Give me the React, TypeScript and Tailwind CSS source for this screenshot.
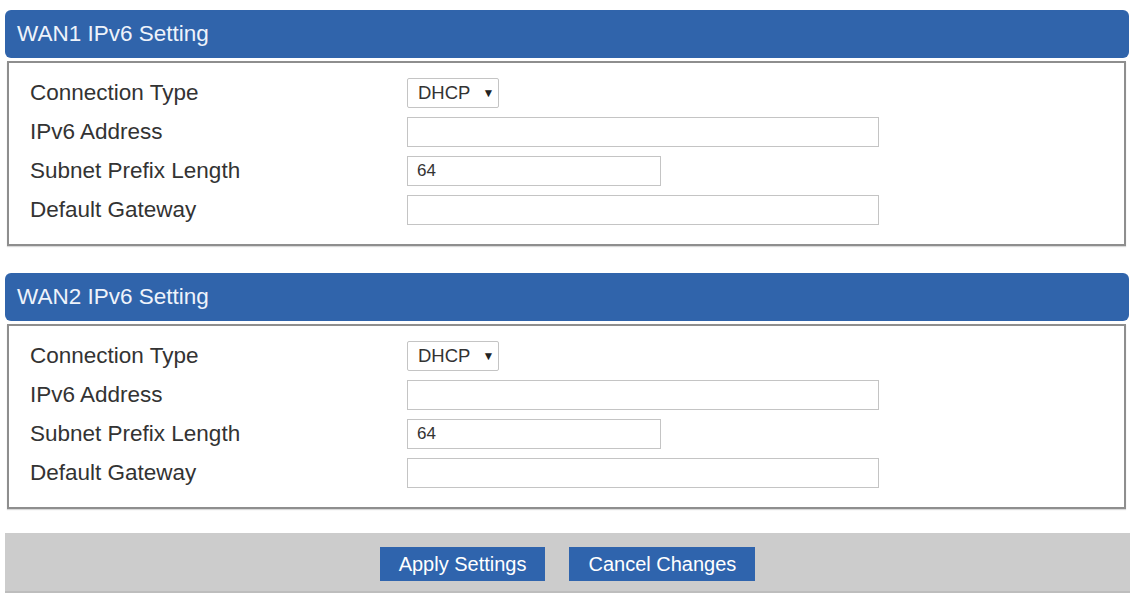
import React from "react";

const font = { fontFamily: '"Liberation Sans", Arial, sans-serif' };

function Row({ label, children }: { label: string; children: React.ReactNode }) {
  return (
    <div className="flex items-center h-[30px]">
      <div className="w-[377px] shrink-0 text-[22.5px] leading-none text-[#333333]">{label}</div>
      {children}
    </div>
  );
}

function Section({ title }: { title: string }) {
  return (
    <div className="flex flex-col">
      <div className="h-[48px] rounded-[6px] bg-[#3064ab] flex items-center pl-[12px] text-[22.5px] text-[#eef3fb]">
        {title}
      </div>
      <div className="mt-[3px] ml-[2px] mr-[3px] border-2 border-[#8e8e8e] bg-white pt-[15px] pb-[19px] pl-[21px] flex flex-col gap-[9px] shadow-[0_1px_1px_rgba(0,0,0,0.15)]">
        <Row label="Connection Type">
          <div className="h-[30px] w-[92px] border border-[#c4c4c4] rounded-[2px] flex items-center pl-[10px] text-[18.5px] text-[#333333] bg-white">
            <span>DHCP</span>
            <span className="ml-[12px] text-[12px] text-[#222]">▼</span>
          </div>
        </Row>
        <Row label="IPv6 Address">
          <div className="h-[30px] w-[472px] border border-[#c4c4c4] bg-white" />
        </Row>
        <Row label="Subnet Prefix Length">
          <div className="h-[30px] w-[254px] border border-[#c4c4c4] bg-white flex items-center pl-[9px] text-[17px] text-[#333333]">
            64
          </div>
        </Row>
        <Row label="Default Gateway">
          <div className="h-[30px] w-[472px] border border-[#c4c4c4] bg-white" />
        </Row>
      </div>
    </div>
  );
}

export default function App() {
  return (
    <div style={font} className="w-[1131px] h-[596px] bg-white overflow-hidden pt-[10px]">
      <div className="pl-[5px] pr-[2px] flex flex-col gap-[27px]">
        <Section title="WAN1 IPv6 Setting" />
        <Section title="WAN2 IPv6 Setting" />
      </div>
      <div className="mt-[24px] ml-[5px] mr-[1px] h-[60px] bg-[#cccccc] border-b-2 border-[#bdbdbd] flex items-center justify-center gap-[24px] pt-[4px]">
        <button className="h-[34px] px-[19px] bg-[#2f64ad] text-white text-[20px] leading-none">
          Apply Settings
        </button>
        <button className="h-[34px] px-[19px] bg-[#2f64ad] text-white text-[20px] leading-none">
          Cancel Changes
        </button>
      </div>
    </div>
  );
}
